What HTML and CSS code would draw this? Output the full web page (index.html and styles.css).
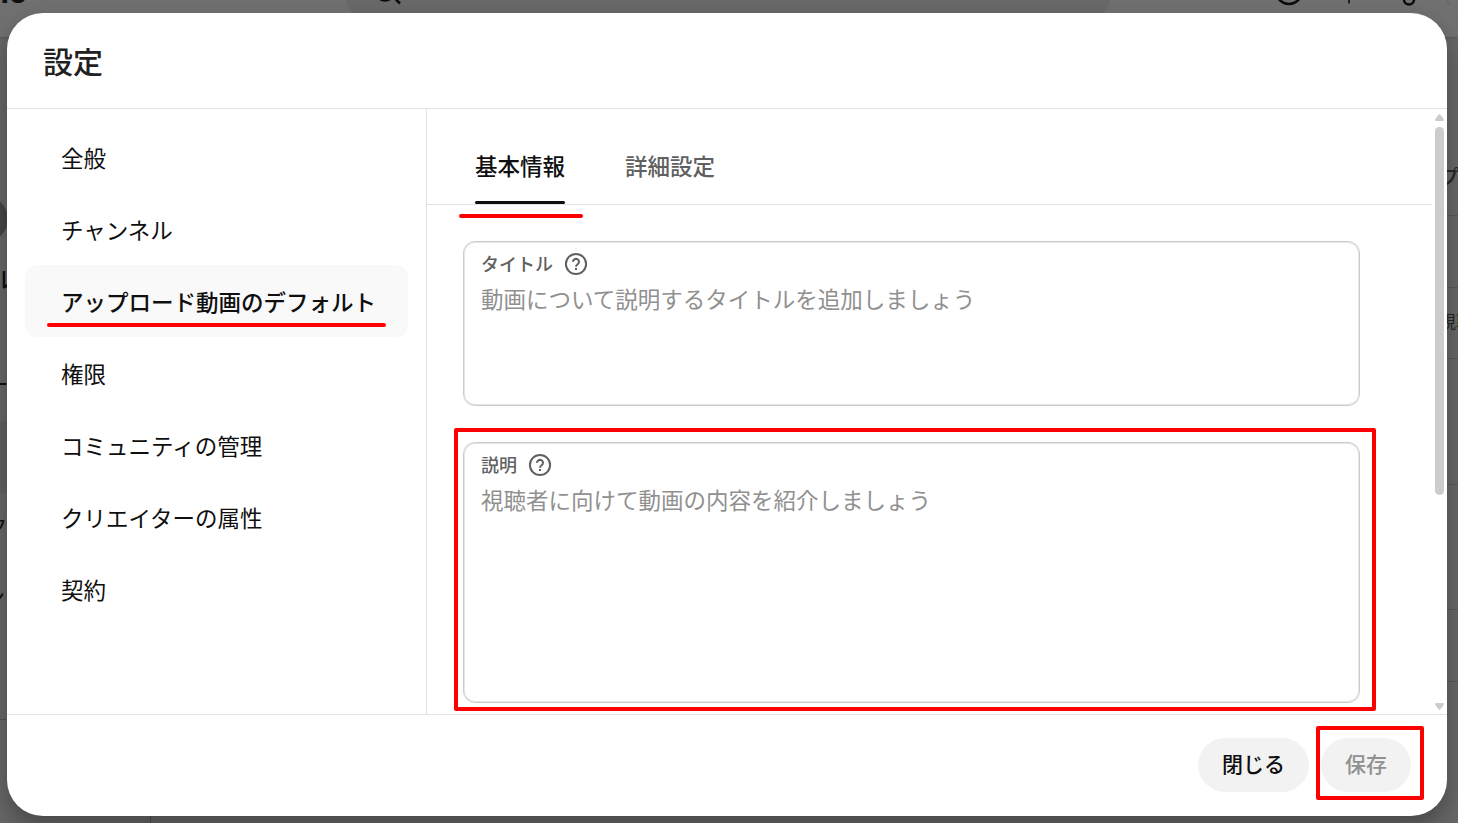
FILE: index.html
```html
<!DOCTYPE html>
<html lang="ja">

<head>
    <meta charset="UTF-8">
    <meta name="viewport" content="width=device-width, initial-scale=1.0">
    <title>設定</title>
    <link rel="stylesheet" href="styles.css">
</head>

<body>

    <!-- dimmed page under the dialog -->
    <div class="page">
        <div class="topbar"></div>
        <span class="logo">io</span>
        <div class="search"></div>
        <svg class="search-icon" width="30" height="26" viewBox="0 0 30 26"><circle cx="9" cy="11.500" r="9" /><path d="M15 14.500l9 9" /></svg>
        <svg class="top-icons" width="180" height="14" viewBox="0 0 180 14"><circle cx="19" cy="-9" r="13" /><path d="M79 -8V3.500" stroke-width="1.500" /><circle cx="139" cy="-.5" r="5" /><circle cx="199" cy="-10" r="24" class="avatar-ring" /></svg>
        <div class="avatar"></div>
        <span class="page-text side-1">ル</span>
        <span class="page-text side-2">ー</span>
        <span class="page-text side-3">ク</span>
        <span class="page-text side-4">ン</span>
        <div class="side-active"></div>
        <div class="side-line"></div>
        <div class="side-edge"></div>
        <span class="page-text col-1">プ</span>
        <span class="page-text col-2">視聴</span>
        <div class="row-line line-1"></div>
        <div class="row-line line-2"></div>
        <div class="row-line line-3"></div>
        <div class="row-line line-4"></div>
        <div class="row-line line-5"></div>
        <div class="row-line line-6"></div>
    </div>

    <div class="dialog">
        <header class="dialog-header">
            <h1>設定</h1>
        </header>

        <div class="dialog-body">
            <nav class="sidebar">
                <a class="nav-item">全般</a>
                <a class="nav-item">チャンネル</a>
                <a class="nav-item active">アップロード動画のデフォルト<span class="mark mark-nav"></span></a>
                <a class="nav-item">権限</a>
                <a class="nav-item">コミュニティの管理</a>
                <a class="nav-item">クリエイターの属性</a>
                <a class="nav-item">契約</a>
            </nav>

            <main class="content">
                <div class="panel">
                    <div class="tabs">
                        <div class="tab active">基本情報<span class="mark mark-tab"></span></div>
                        <div class="tab">詳細設定</div>
                    </div>
                    <div class="fields">
                        <div class="field field-title">
                            <div class="field-label">
                                タイトル
                                <svg class="help" width="24" height="24" viewBox="0 0 24 24"><circle cx="12" cy="12" r="10.100" /><path d="M9 9.900a3 2.900 0 1 1 4.700 2.300c-1 .7-1.700 1.200-1.700 2.500" /><path class="dot" d="M11 16h2v2h-2z" /></svg>
                            </div>
                            <div class="placeholder">動画について説明するタイトルを追加しましょう</div>
                        </div>
                        <div class="field field-description">
                            <div class="field-label">
                                説明
                                <svg class="help" width="24" height="24" viewBox="0 0 24 24"><circle cx="12" cy="12" r="10.100" /><path d="M9 9.900a3 2.900 0 1 1 4.700 2.300c-1 .7-1.700 1.200-1.700 2.500" /><path class="dot" d="M11 16h2v2h-2z" /></svg>
                            </div>
                            <div class="placeholder">視聴者に向けて動画の内容を紹介しましょう</div>
                            <span class="mark-box mark-description"></span>
                        </div>
                    </div>
                </div>
                <div class="scrollbar">
                    <svg width="9" height="7" viewBox="0 0 9 7"><path d="M3.500.7Q4.500-.4 5.500.7L8.700 5Q9.300 7 8 7H1Q-.3 7 .3 5z" /></svg>
                    <div class="thumb"></div>
                    <svg class="arrow-down" width="9" height="7" viewBox="0 0 9 7"><path d="M3.500 6.300Q4.500 7.400 5.500 6.300L8.700 2Q9.300 0 8 0H1Q-.3 0 .3 2z" /></svg>
                </div>
            </main>
        </div>

        <footer class="dialog-footer">
            <button class="btn">閉じる</button>
            <button class="btn btn-save" disabled>保存<span class="mark-box mark-save"></span></button>
        </footer>
    </div>

</body>

</html>
```

FILE: styles.css
```css
* {
    box-sizing: border-box;
}

body {
    margin: 0;
    height: 823px;
    overflow: hidden;
    position: relative;
    padding: 13px 11px 7px 7px;
    background: #666;
    color: #0f0f0f;
    font-family: "Noto Sans CJK JP", sans-serif;
    font-size: 22.5px;
}

/* page behind the dialog */
.page {
    position: absolute;
    inset: 0;
    overflow: hidden;
    background: #676767;
}

.page > * {
    position: absolute;
}

.topbar {
    left: 0;
    top: 0;
    width: 100%;
    height: 37px;
    background: #707070;
    box-shadow: 0 1px 3px rgba(0, 0, 0, 0.2);
}

.logo {
    right: 1431px;
    top: -28px;
    font: bold 32px/40px Roboto, sans-serif;
}

.search {
    left: 345px;
    top: -36px;
    width: 766px;
    height: 60px;
    border-radius: 30px;
    background: #696969;
}

.search-icon {
    left: 376px;
    top: -20px;
    fill: none;
    stroke: #0b0b0b;
    stroke-width: 2.500;
}

.top-icons {
    left: 1270px;
    top: 0;
    fill: none;
    stroke: #0b0b0b;
    stroke-width: 2.500;
}

.avatar-ring {
    stroke: #606060;
    stroke-width: 1;
}

.avatar {
    left: -38px;
    top: 196px;
    width: 46px;
    height: 46px;
    border-radius: 50%;
    background: #454545;
}

.page-text {
    line-height: 30px;
    white-space: nowrap;
}

.side-1 {
    left: -9px;
    top: 263px;
    font-weight: 500;
}

.side-2 {
    left: -14px;
    top: 368px;
}

.side-3 {
    right: 1451px;
    top: 511px;
    font-size: 20px;
}

.side-4 {
    right: 1453px;
    top: 580px;
}

.side-active {
    left: 0;
    top: 421px;
    width: 8px;
    height: 72px;
    background: #616161;
}

.side-line {
    left: 0;
    top: 719px;
    width: 8px;
    height: 1px;
    background: #555;
}

.side-edge {
    left: 150px;
    top: 813px;
    width: 1px;
    height: 10px;
    background: #4b4b4b;
}

.col-1 {
    left: 1439px;
    top: 162px;
    font-size: 20px;
    font-weight: 500;
    color: #252525;
}

.col-2 {
    left: 1439px;
    top: 306px;
    font-size: 17px;
    color: #252525;
}

.row-line {
    left: 1440px;
    right: 0;
    height: 1px;
    background: #595959;
}

.line-1 { top: 215px; }
.line-2 { top: 287px; }
.line-3 { top: 358px; }
.line-4 { top: 484px; }
.line-5 { top: 609px; }
.line-6 { top: 681px; }

/* dialog */
.dialog {
    position: relative;
    height: 803px;
    display: flex;
    flex-direction: column;
    background: #fff;
    border-radius: 36px;
    box-shadow: 0 12px 24px rgba(0, 0, 0, 0.3);
}

.dialog-header {
    height: 96px;
    padding: 0 36px;
    display: flex;
    align-items: center;
    border-bottom: 1px solid #e2e2e2;
}

.dialog-header h1 {
    margin: 0;
    padding-bottom: 2px;
    font-size: 30px;
    font-weight: 500;
    line-height: 42px;
    color: #212121;
}

.dialog-body {
    height: 605px;
    display: flex;
}

.sidebar {
    width: 420px;
    padding: 12px 18px;
    border-right: 1px solid #e2e2e2;
}

.nav-item {
    position: relative;
    display: flex;
    align-items: center;
    height: 72px;
    padding: 0 36px;
    border-radius: 12px;
    white-space: nowrap;
}

.nav-item.active {
    background: #f9f9f9;
    font-weight: 500;
}

.content {
    flex: 1;
    display: flex;
}

.panel {
    width: 1005px;
}

.tabs {
    height: 96px;
    padding-left: 48px;
    display: flex;
    gap: 60px;
    border-bottom: 1px solid #e2e2e2;
}

.tab {
    position: relative;
    height: 95px;
    padding-top: 39px;
    line-height: 34px;
    font-weight: 500;
    color: #606060;
}

.tab.active {
    color: #0f0f0f;
}

.tab.active::after {
    content: "";
    position: absolute;
    left: 0;
    bottom: 0;
    width: 100%;
    height: 3px;
    border-radius: 2px;
    background: #0f0f0f;
}

.fields {
    display: flex;
    flex-direction: column;
    gap: 36px;
    padding: 36px 72px 0 36px;
}

.field {
    position: relative;
    padding: 8px 17px;
    border: 1px solid #ccc;
    border-radius: 12px;
    box-shadow: inset 0 0 0 1px #e6e6e6;
}

.field-title {
    height: 165px;
}

.field-description {
    height: 261px;
}

.field-label {
    display: flex;
    align-items: center;
    gap: 11px;
    height: 27px;
    font-size: 18px;
    font-weight: 500;
    line-height: 27px;
    color: #606060;
}

.placeholder {
    margin-top: 3px;
    line-height: 36px;
    color: #909090;
}

.help {
    fill: none;
    stroke: #606060;
    stroke-width: 2;
}

.help .dot {
    fill: #606060;
    stroke: none;
}

.scrollbar {
    width: 9px;
    margin-left: 3px;
    padding: 5px 0 4px;
    display: flex;
    flex-direction: column;
    fill: #ccc;
}

.thumb {
    height: 368px;
    margin-top: 6px;
    border-radius: 5px;
    background: #ccc;
}

.arrow-down {
    margin-top: auto;
}

.dialog-footer {
    flex: 1;
    display: flex;
    justify-content: flex-end;
    gap: 12px;
    padding: 23px 36px 0;
    border-top: 1px solid #e2e2e2;
}

.btn {
    position: relative;
    height: 54px;
    padding: 0 24px 5px;
    border: none;
    border-radius: 27px;
    background: #f2f2f2;
    color: #0f0f0f;
    font-family: inherit;
    font-size: 21px;
    font-weight: 500;
}

.btn-save {
    color: #909090;
}

/* red highlights */
.mark {
    position: absolute;
    height: 4px;
    border-radius: 2px;
    background: #f00;
}

.mark-nav {
    left: 22px;
    top: 58px;
    width: 339px;
}

.mark-tab {
    left: -16px;
    top: 105px;
    width: 124px;
}

.mark-box {
    position: absolute;
    border: 4px solid #f00;
    border-radius: 2px;
}

.mark-description {
    left: -10px;
    top: -15px;
    width: 922px;
    height: 283px;
}

.mark-save {
    left: -5px;
    top: -12px;
    width: 108px;
    height: 74px;
}
```
